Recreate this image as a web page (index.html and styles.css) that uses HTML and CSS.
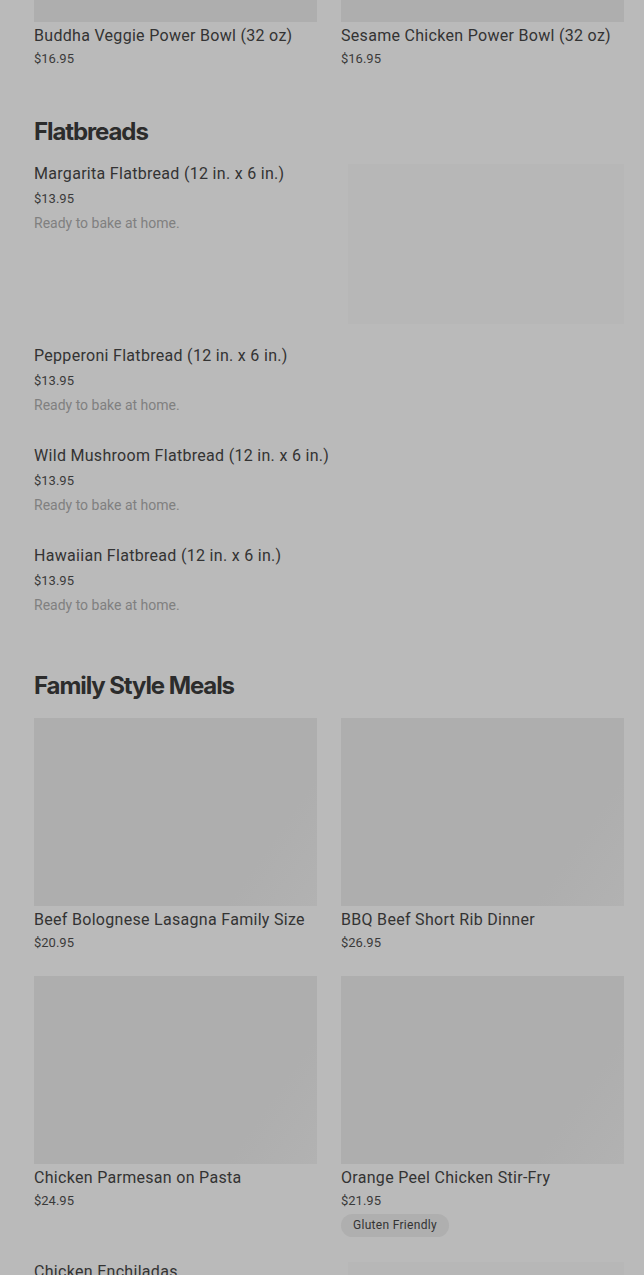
FILE: index.html
```html
<!DOCTYPE html>
<html lang="en">
<head>
<meta charset="utf-8">
<title>Menu</title>
<link rel="stylesheet" href="styles.css">
</head>
<body>
<main class="page">
  <section class="section first">
    <div class="grid">
      <div class="card">
        <div class="thumb tail"></div>
        <div class="name">Buddha Veggie Power Bowl (32 oz)</div>
        <div class="price">$16.95</div>
      </div>
      <div class="card">
        <div class="thumb tail"></div>
        <div class="name">Sesame Chicken Power Bowl (32 oz)</div>
        <div class="price">$16.95</div>
      </div>
    </div>
  </section>

  <section class="section">
    <h2 class="heading">Flatbreads</h2>
    <div class="list">
      <div class="row">
        <div class="info">
          <div class="name">Margarita Flatbread (12 in. x 6 in.)</div>
          <div class="price">$13.95</div>
          <div class="desc">Ready to bake at home.</div>
        </div>
        <div class="side-img"></div>
      </div>
      <div class="row">
        <div class="info">
          <div class="name">Pepperoni Flatbread (12 in. x 6 in.)</div>
          <div class="price">$13.95</div>
          <div class="desc">Ready to bake at home.</div>
        </div>
      </div>
      <div class="row">
        <div class="info">
          <div class="name">Wild Mushroom Flatbread (12 in. x 6 in.)</div>
          <div class="price">$13.95</div>
          <div class="desc">Ready to bake at home.</div>
        </div>
      </div>
      <div class="row">
        <div class="info">
          <div class="name">Hawaiian Flatbread (12 in. x 6 in.)</div>
          <div class="price">$13.95</div>
          <div class="desc">Ready to bake at home.</div>
        </div>
      </div>
    </div>
  </section>

  <section class="section">
    <h2 class="heading">Family Style Meals</h2>
    <div class="grid">
      <div class="card">
        <div class="thumb"></div>
        <div class="name">Beef Bolognese Lasagna Family Size</div>
        <div class="price">$20.95</div>
      </div>
      <div class="card">
        <div class="thumb"></div>
        <div class="name">BBQ Beef Short Rib Dinner</div>
        <div class="price">$26.95</div>
      </div>
      <div class="card">
        <div class="thumb"></div>
        <div class="name">Chicken Parmesan on Pasta</div>
        <div class="price">$24.95</div>
      </div>
      <div class="card">
        <div class="thumb"></div>
        <div class="name">Orange Peel Chicken Stir-Fry</div>
        <div class="price">$21.95</div>
        <span class="badge">Gluten Friendly</span>
      </div>
    </div>
    <div class="list after-grid">
      <div class="row">
        <div class="info">
          <div class="name">Chicken Enchiladas</div>
        </div>
        <div class="side-img"></div>
      </div>
    </div>
  </section>
</main>
</body>
</html>
```
FILE: styles.css
```css
* { box-sizing: border-box; }
html, body { margin: 0; padding: 0; }
body {
  background: #bababa;
  font-family: Roboto, "Liberation Sans", Arial, sans-serif;
  color: #323232;
  height: 1275px;
  overflow: hidden;
}
.page {
  padding: 0 20px 0 34px;
  display: flex;
  flex-direction: column;
  gap: 46px;
}
.section.first { margin-bottom: 2px; }
.heading {
  margin: 0 0 16px;
  font-family: Inter, "Liberation Sans", sans-serif;
  font-size: 24px;
  line-height: 32px;
  font-weight: 700;
  letter-spacing: -1.1px;
  color: #2c2c2c;
}
.grid {
  display: grid;
  grid-template-columns: 1fr 1fr;
  column-gap: 24px;
  row-gap: 24px;
  align-items: start;
}
.card { display: flex; flex-direction: column; align-items: flex-start; }
.thumb {
  width: 100%;
  height: 188px;
  background: linear-gradient(125deg, #aeaeae 0%, #aeaeae 78%, #b2b2b2 100%);
}
.thumb.tail { height: 22px; background: #aeaeae; }
.name {
  margin-top: 4px;
  font-size: 16px;
  line-height: 20px;
  letter-spacing: 0.3px;
  color: #333;
  white-space: nowrap;
}
.price {
  margin-top: 4px;
  font-size: 13px;
  line-height: 18px;
  color: #3a3a3a;
}
.badge {
  margin-top: 4px;
  height: 23px;
  padding: 0 12px;
  border-radius: 12px;
  background: #afafaf;
  font-size: 12px;
  line-height: 23px;
  letter-spacing: 0.3px;
  color: #333;
}
.list { display: flex; flex-direction: column; gap: 22px; }
.list.after-grid { margin-top: 25px; }
.row {
  display: flex;
  justify-content: space-between;
  min-height: 78px;
}
.row .name { margin-top: 0; }
.row .price { margin-top: 5px; line-height: 20px; }
.desc {
  margin-top: 4px;
  font-size: 14px;
  line-height: 20px;
  color: #808080;
}
.side-img {
  flex: 0 0 276px;
  height: 160px;
  background: #b7b7b7;
}
```
